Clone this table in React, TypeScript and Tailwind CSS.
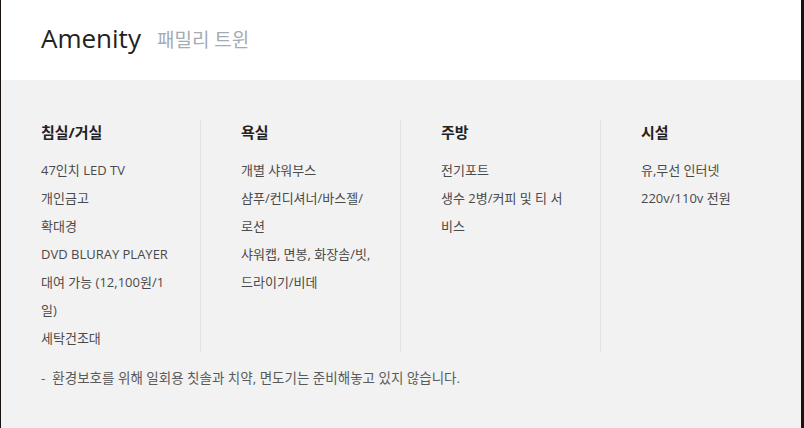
import { FC } from "react";

const columns = [
  { title: "침실/거실", items: ["47인치 LED TV", "개인금고", "확대경", "DVD BLURAY PLAYER", "대여 가능 (12,100원/1일)", "세탁건조대"] },
  { title: "욕실", items: ["개별 샤워부스", "샴푸/컨디셔너/바스젤/로션", "샤워캡, 면봉, 화장솜/빗, 드라이기/비데"] },
  { title: "주방", items: ["전기포트", "생수 2병/커피 및 티 서비스"] },
  { title: "시설", items: ["유,무선 인터넷", "220v/110v 전원"] },
];

const font = { fontFamily: '"Open Sans", "Noto Sans CJK KR", sans-serif' };

const App: FC = () => {
  return (
    <div className="w-[804px] h-[428px] bg-[#1a120d] flex overflow-hidden" style={font}>
      <div className="ml-[1px] w-[800px] h-full flex flex-col bg-[#f2f2f2]">
        {/* header */}
        <div className="h-20 bg-white flex items-center gap-4 pl-10 pb-1">
          <h1 className="text-[26px] text-[#222] leading-none">Amenity</h1>
          <span className="text-[19px] text-[#a3abb3] leading-none mt-1">패밀리 트윈</span>
        </div>
        {/* body */}
        <div className="flex pt-10">
          {columns.map((col, idx) => (
            <div
              key={col.title}
              className={`w-[200px] pl-10 pr-7 ${idx < 3 ? "border-r border-[#dfe3e7]" : ""}`}
            >
              <h2 className="text-[15px] font-bold text-[#222] leading-6">{col.title}</h2>
              <ul className="mt-3 text-[13px] text-[#4a4a4a] leading-7">
                {col.items.map((item) => (
                  <li key={item}>{item}</li>
                ))}
              </ul>
            </div>
          ))}
        </div>
        <p className="mt-4 pl-10 text-[13.5px] text-[#5a5a5a] leading-5">
          -&nbsp; 환경보호를 위해 일회용 칫솔과 치약, 면도기는 준비해놓고 있지 않습니다.
        </p>
      </div>
    </div>
  );
};

export default App;
